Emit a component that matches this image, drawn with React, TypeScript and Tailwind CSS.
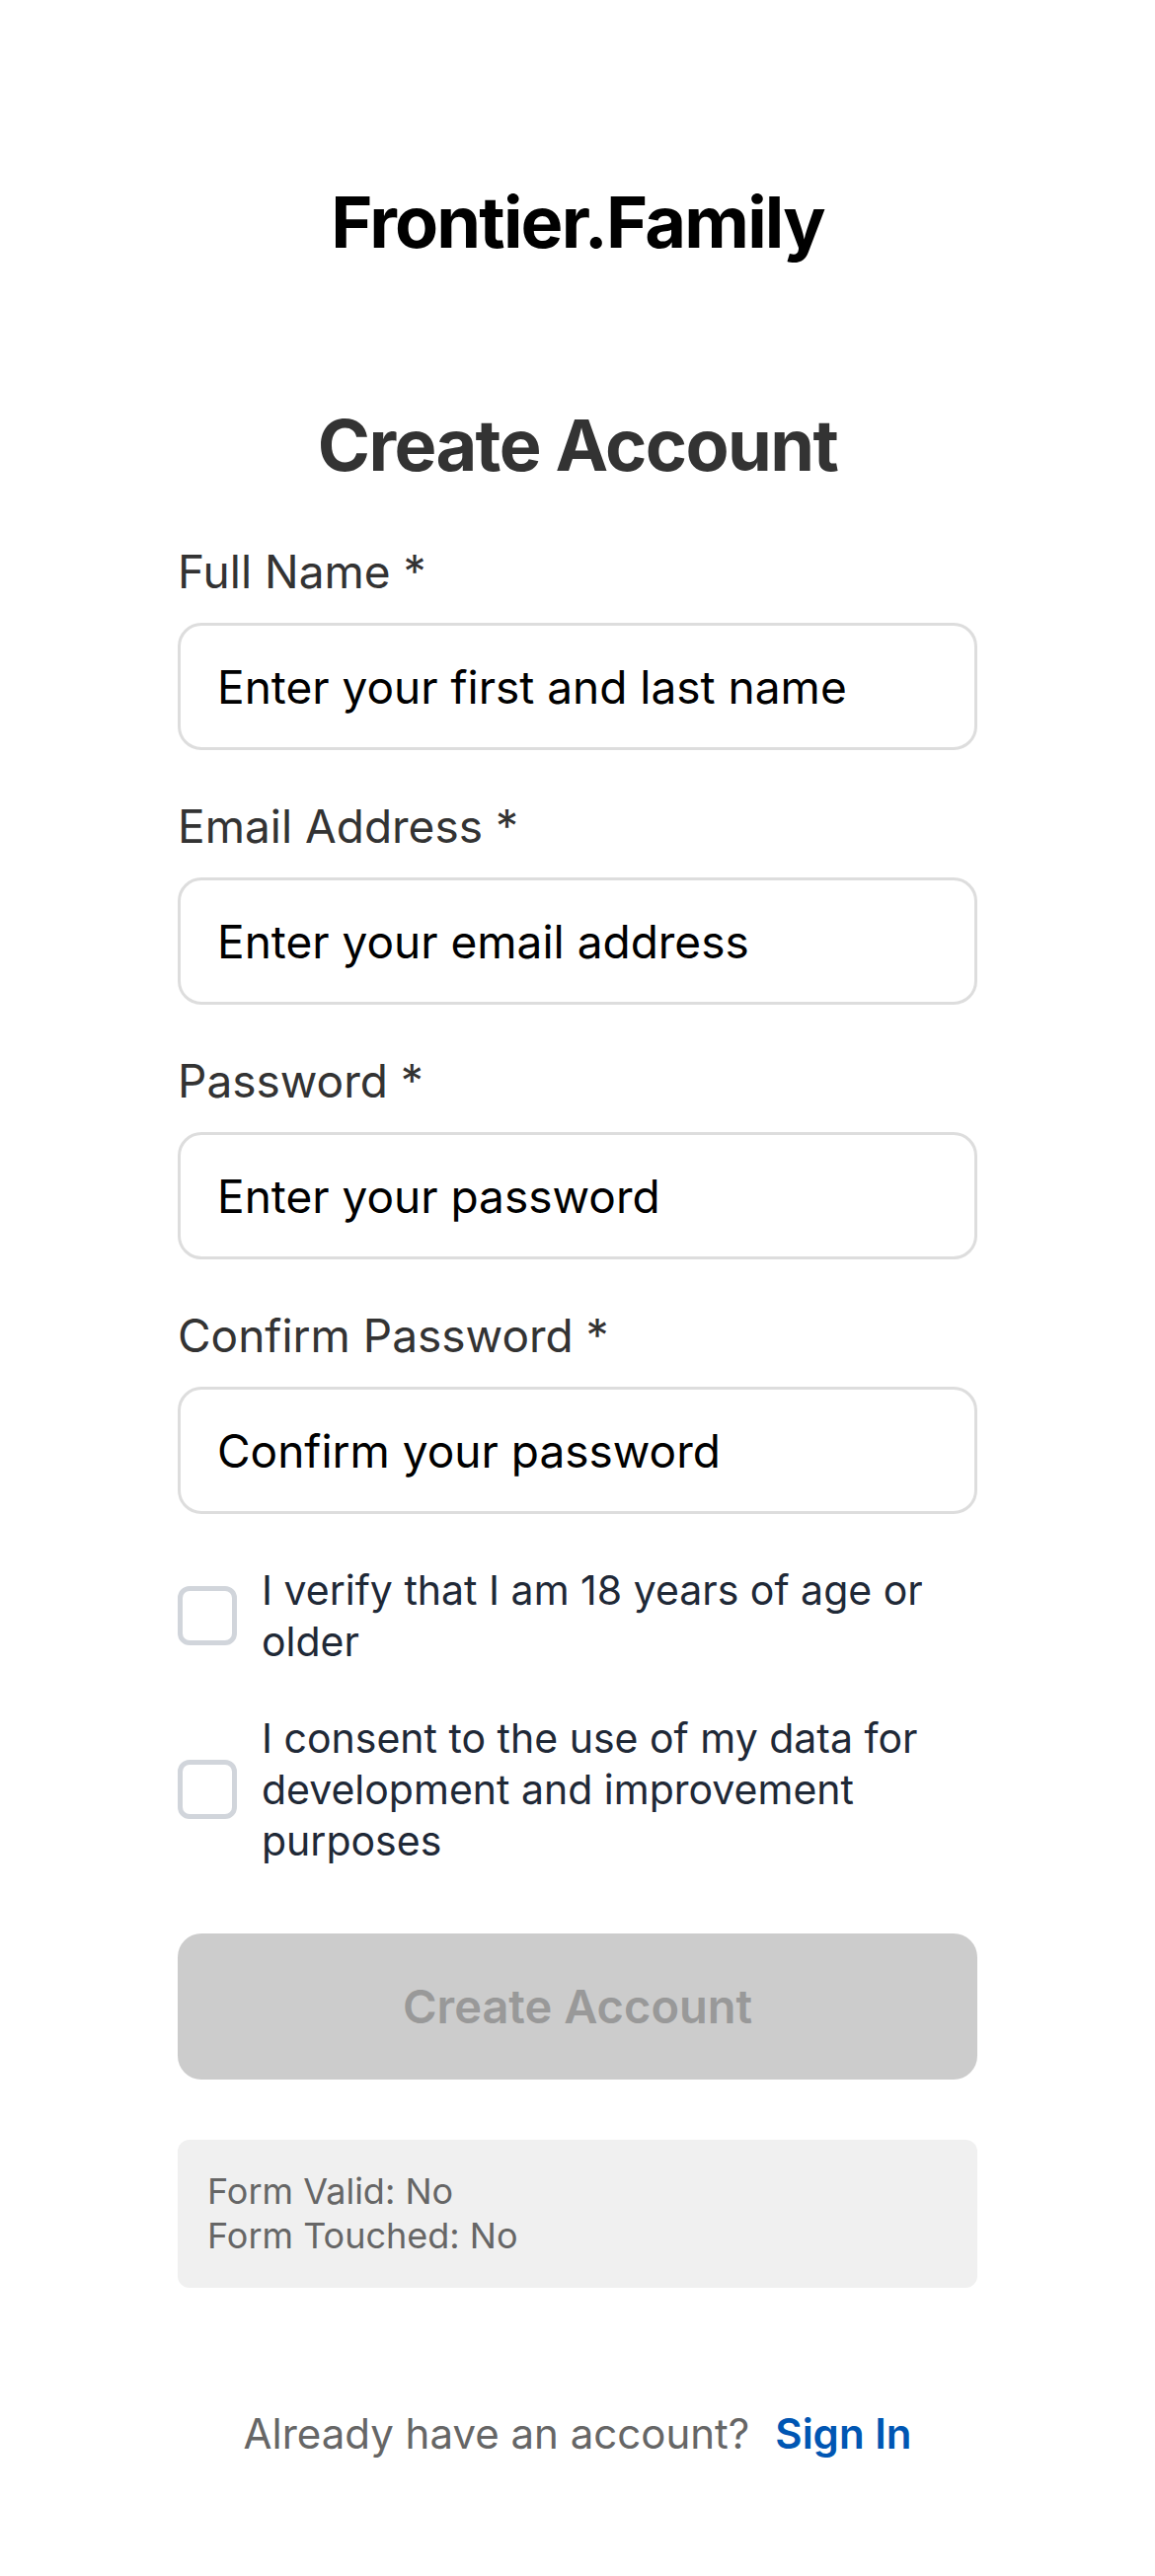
import { useState } from "react";

const fields = [
  { label: "Full Name *", placeholder: "Enter your first and last name", type: "text" },
  { label: "Email Address *", placeholder: "Enter your email address", type: "email" },
  { label: "Password *", placeholder: "Enter your password", type: "password" },
  { label: "Confirm Password *", placeholder: "Confirm your password", type: "password" },
];

function Check({
  checked,
  onChange,
  children,
}: {
  checked: boolean;
  onChange: () => void;
  children: React.ReactNode;
}) {
  return (
    <label className="flex items-center cursor-pointer">
      <span
        onClick={onChange}
        className={`w-[60px] h-[60px] shrink-0 rounded-[12px] border-[5px] ${
          checked ? "border-[#0056b3] bg-[#0056b3]" : "border-[#d1d5db] bg-white"
        }`}
      />
      <span className="ml-[25px] text-[41px] leading-[52px] text-[#1f2937]">
        {children}
      </span>
    </label>
  );
}

export default function App() {
  const [age, setAge] = useState(false);
  const [consent, setConsent] = useState(false);

  return (
    <div className="min-h-[2610px] bg-white px-[180px] font-['Inter','Noto_Sans',sans-serif]">
      <h1 className="pt-[182px] text-center text-[72px] leading-[86px] font-bold text-black tracking-[-1.8px]">
        Frontier.Family
      </h1>

      <h2 className="mt-[140px] text-center text-[72px] leading-[86px] font-bold text-[#333] tracking-[-1.6px]">
        Create Account
      </h2>

      <form className="mt-[56px]" onSubmit={(e) => e.preventDefault()}>
        {fields.map((f, i) => (
          <div key={f.label} className={i > 0 ? "mt-[48px]" : ""}>
            <div className="text-[46px] leading-[58px] text-[#333]">{f.label}</div>
            <input
              type={f.type}
              placeholder={f.placeholder}
              className="mt-[23px] block w-full h-[129px] rounded-[24px] border-[3px] border-[#dddddd] px-[37px] text-[46px] text-black placeholder:text-black outline-none"
            />
          </div>
        ))}

        <div className="mt-[51px] flex flex-col gap-[46px]">
          <Check checked={age} onChange={() => setAge(!age)}>
            I verify that I am 18 years of age or older
          </Check>
          <Check checked={consent} onChange={() => setConsent(!consent)}>
            I consent to the use of my data for development and improvement purposes
          </Check>
        </div>

        <button
          type="submit"
          disabled
          className="mt-[68px] w-full h-[148px] rounded-[24px] bg-[#cccccc] text-[47px] font-semibold text-[#999999]"
        >
          Create Account
        </button>

        <div className="mt-[61px] rounded-[12px] bg-[#f0f0f0] px-[30px] py-[30px] text-[36px] leading-[45px] text-[#666]">
          <div>Form Valid: No</div>
          <div>Form Touched: No</div>
        </div>
      </form>

      <div className="mt-[118px] flex justify-center items-baseline text-[42px] leading-[60px]">
        <span className="text-[#666]">Already have an account?</span>
        <a className="ml-[26px] font-semibold text-[#0056b3]">Sign In</a>
      </div>
    </div>
  );
}
